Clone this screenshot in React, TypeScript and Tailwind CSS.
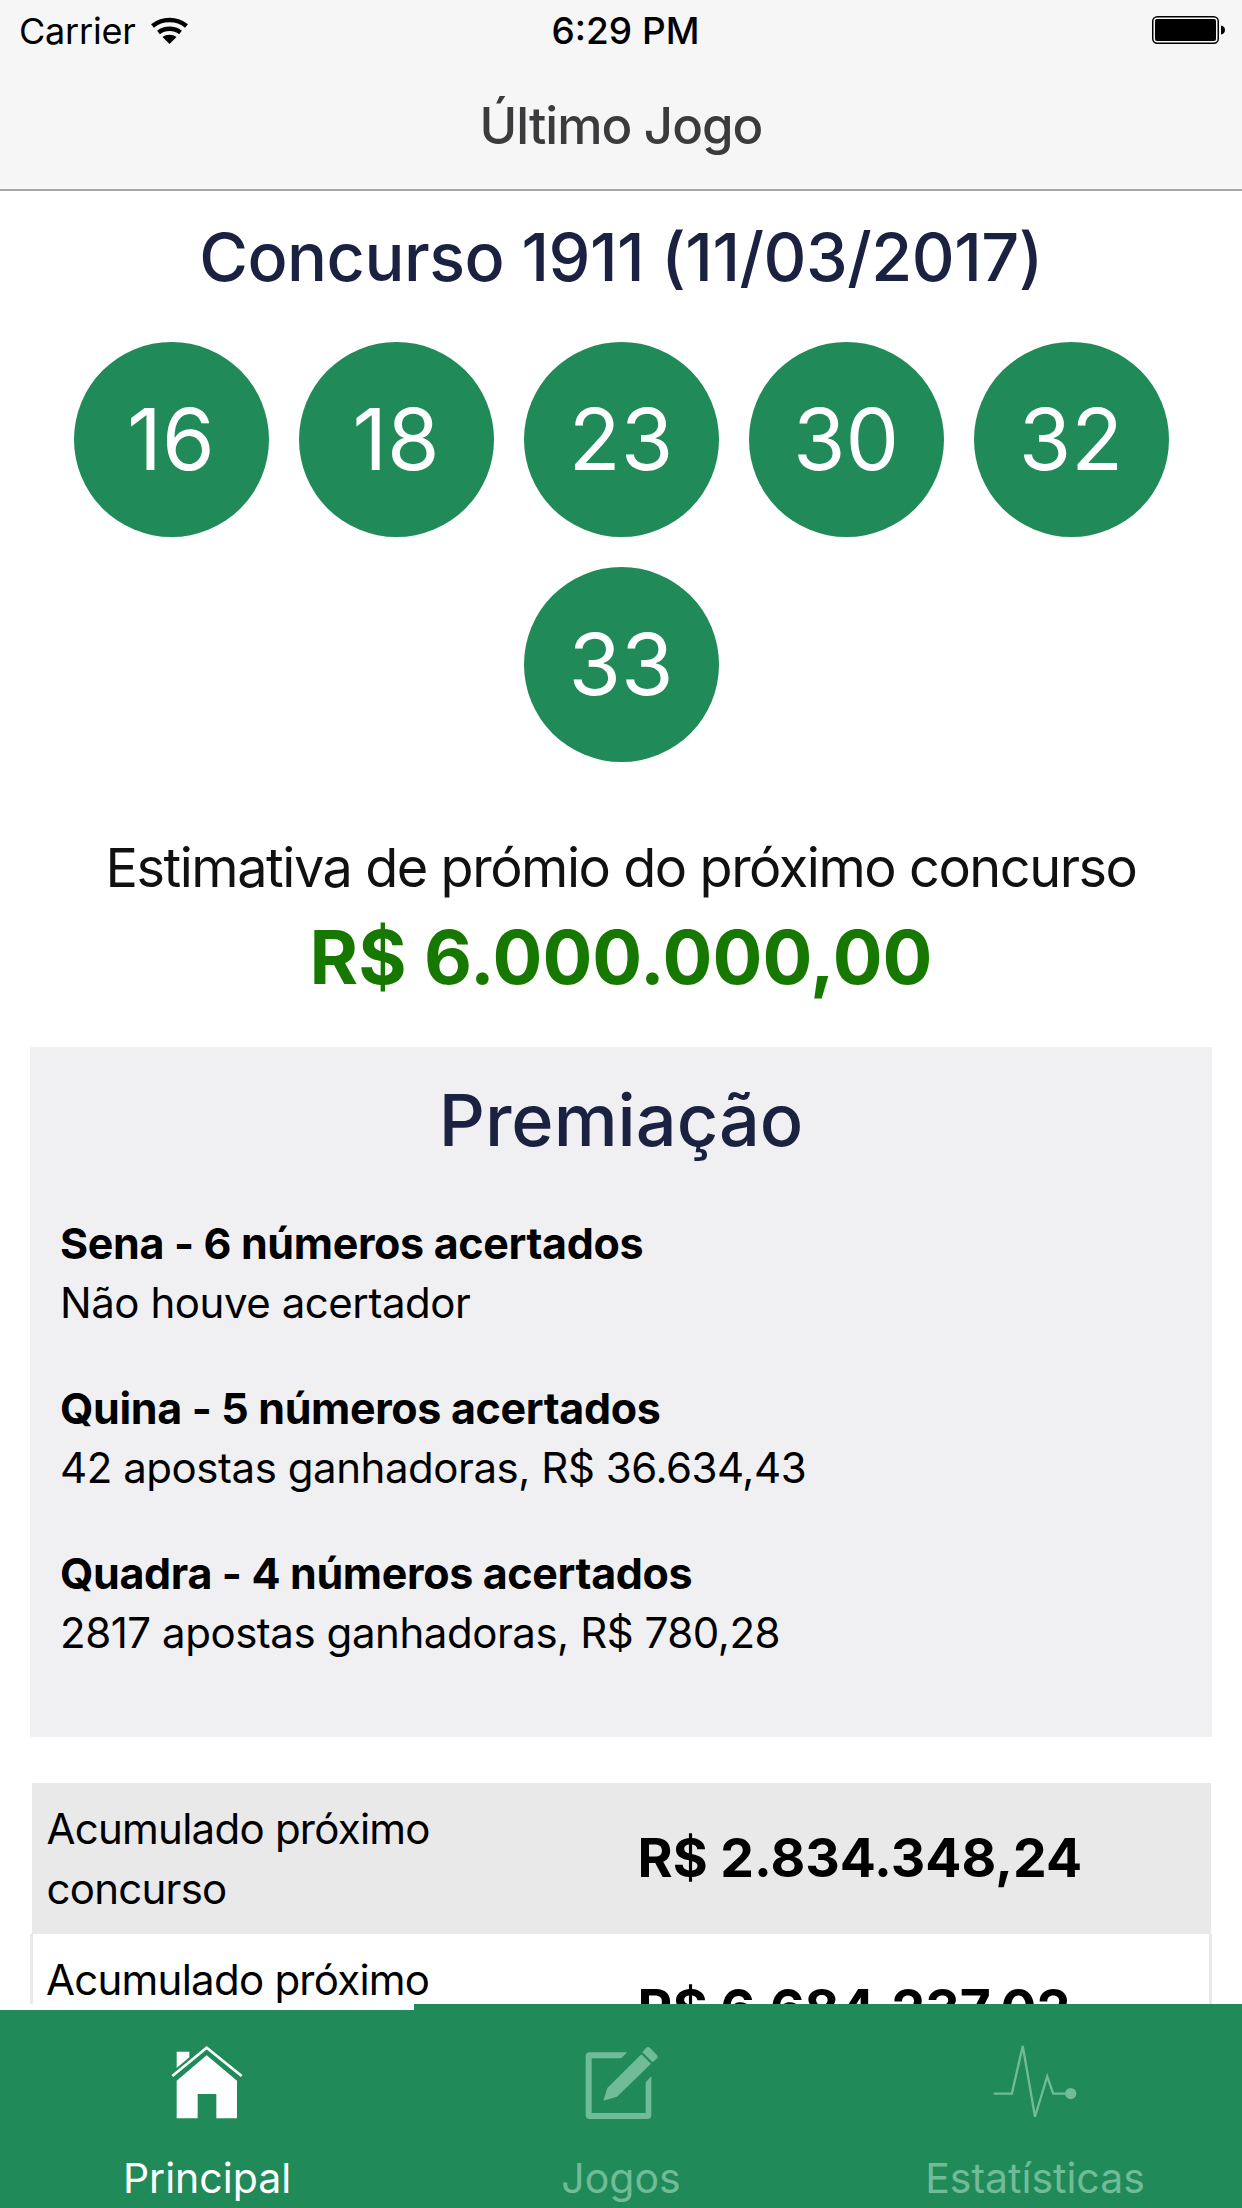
import React from 'react';

const font = "font-['Inter','Noto_Sans',sans-serif]";

const WifiIcon = () => (
    <svg width="37" height="27" viewBox="0 0 37 27" fill="none" stroke="currentColor" strokeWidth="4.5">
        <path d="M1.5 9C11 1 26 1 35.5 9" />
        <path d="M7.5 15.5C14 10.5 23 10.5 29.5 15.5" />
        <path d="M18.5 27L11.5 20C15.5 17 21.5 17 25.5 20Z" fill="currentColor" stroke="none" />
    </svg>
);

const BatteryIcon = () => (
    <svg width="74" height="28" viewBox="0 0 74 28">
        <rect x="0.75" y="0.75" width="65.5" height="26.5" rx="4.5" fill="none" stroke="black" strokeWidth="1.5" />
        <rect x="3" y="3" width="61" height="22" rx="2" fill="black" />
        <path d="M69 9.5C71.5 10 73 11.5 73 14C73 16.5 71.5 18 69 18.5Z" fill="black" />
    </svg>
);

const HomeIcon = () => (
    <svg width="74" height="75" viewBox="210 105 222 225" fill="white">
        <path d="M320 136L411 212V325H349V252H293V325H230V212Z" />
        <path d="M230 125H268V142L230 174Z" />
        <path d="M217 198L320 113L425 198" fill="none" stroke="white" strokeWidth="8" />
    </svg>
);

const NoteIcon = () => (
    <svg width="74" height="75" viewBox="130 103 222 225" fill="#72bb98">
        <path d="M147 125H260L241 143H153V307H315V215L332 197V313Q332 325 320 325H147Q135 325 135 313V137Q135 125 147 125Z" />
        <path d="M188 270L200 232L302 131L331 159L229 258Z" />
        <path d="M305 125L316 112Q322 106 328 112L348 132Q354 138 348 144L336 155Z" />
    </svg>
);

const PulseIcon = () => (
    <svg width="84" height="78" viewBox="218 100 254 234" fill="#72bb98">
        <path d="M220 252H275L308 108L345 322L382 200L400 252H440" fill="none" stroke="#72bb98" strokeWidth="7" />
        <circle cx="453" cy="252" r="17" />
    </svg>
);

const balls = [16, 18, 23, 30, 32, 33];

const prizes = [
    { title: 'Sena - 6 números acertados', detail: 'Não houve acertador' },
    { title: 'Quina - 5 números acertados', detail: '42 apostas ganhadoras, R$ 36.634,43' },
    { title: 'Quadra - 4 números acertados', detail: '2817 apostas ganhadoras, R$ 780,28' },
];

const tabs = [
    { label: 'Principal', icon: <HomeIcon />, active: true },
    { label: 'Jogos', icon: <NoteIcon />, active: false },
    { label: 'Estatísticas', icon: <PulseIcon />, active: false },
];

const App: React.FC = () => {
    return (
        <div className={`${font} relative flex h-[2208px] w-[1242px] flex-col overflow-hidden bg-white`}>
            <header className="h-[191px] shrink-0 border-b-2 border-[#a7a7aa] bg-[#f6f6f6]">
                <div className="flex h-[60px] items-center justify-between pr-[16px] pl-[19px] text-[36px] text-black">
                    <div className="flex w-[400px] items-center gap-[15px]">
                        <span className="mt-[2px] tracking-[-0.2px]">Carrier</span>
                        <WifiIcon />
                    </div>
                    <span className="mt-[2px] ml-[6px] text-[37px] font-medium">6:29 PM</span>
                    <div className="flex w-[400px] justify-end">
                        <BatteryIcon />
                    </div>
                </div>
                <h1 className="mt-[1px] text-center text-[51px] leading-[130px] font-medium tracking-[-1px] text-[#3b3b3d]">
                    Último Jogo
                </h1>
            </header>

            <main className="min-h-0 flex-1 overflow-hidden">
                <h2 className="mt-[26px] text-center text-[66.5px] leading-[80px] font-medium tracking-[-0.5px] text-[#1b2140]">
                    Concurso 1911 (11/03/2017)
                </h2>

                <div className="mt-[45px] flex flex-wrap justify-center gap-[30px] px-[73px]">
                    {balls.map(n => (
                        <div
                            key={n}
                            className="flex h-[195px] w-[195px] items-center justify-center rounded-full bg-[#208a58] text-[85px] text-white"
                        >
                            {n}
                        </div>
                    ))}
                </div>

                <p className="mt-[69px] text-center text-[54px] leading-[74px] tracking-[-1.45px] text-[#111111]">
                    Estimativa de prómio do próximo concurso
                </p>
                <p className="mt-[7px] text-center text-[74px] leading-[90px] font-bold text-[#177800]">R$ 6.000.000,00</p>

                <section className="mx-[30px] mt-[45px] h-[690px] bg-[#f0f0f3] pt-[28px]">
                    <h3 className="text-center text-[72px] leading-[90px] font-medium text-[#1b2140]">Premiação</h3>
                    <div className="mt-[48px] flex flex-col gap-[45px] px-[30px]">
                        {prizes.map(prize => (
                            <div key={prize.title} className="text-[42px] leading-[60px] text-black">
                                <p className="text-[43px] font-bold tracking-[-0.35px]">{prize.title}</p>
                                <p className="tracking-[-0.45px]">{prize.detail}</p>
                            </div>
                        ))}
                    </div>
                </section>

                <table className="mx-[30px] mt-[46px] w-[1182px] table-fixed border-collapse text-[42px] text-black">
                    <tbody>
                        <tr className="h-[151px] bg-[#e9e9e9]">
                            <td className="w-[590px] px-[15px] leading-[60px] tracking-[-0.75px]">
                                Acumulado próximo
                                <br />
                                concurso
                            </td>
                            <td className="pl-[16px] text-[53.5px] font-bold">R$ 2.834.348,24</td>
                        </tr>
                        <tr className="h-[151px] border-x-[3px] border-[#e9e9e9] bg-white">
                            <td className="w-[590px] px-[13px] leading-[60px] tracking-[-0.75px]">
                                Acumulado próximo
                                <br />
                                concurso
                            </td>
                            <td className="pl-[16px] text-[53.5px] font-bold">R$ 6.684.237,02</td>
                        </tr>
                    </tbody>
                </table>
            </main>

            <nav className="relative grid h-[204px] shrink-0 grid-cols-3 bg-[#208a58]">
                <div className="absolute top-0 left-0 h-[6px] w-[414px] bg-white" />
                {tabs.map(tab => (
                    <div
                        key={tab.label}
                        className={`flex flex-col items-center pt-[39px] ${tab.active ? 'text-white' : 'text-[#72bb98]'}`}
                    >
                        <div className="flex h-[78px] items-center">{tab.icon}</div>
                        <span className="mt-[32px] text-[41px] leading-[50px]">{tab.label}</span>
                    </div>
                ))}
            </nav>
        </div>
    );
};

export default App;
